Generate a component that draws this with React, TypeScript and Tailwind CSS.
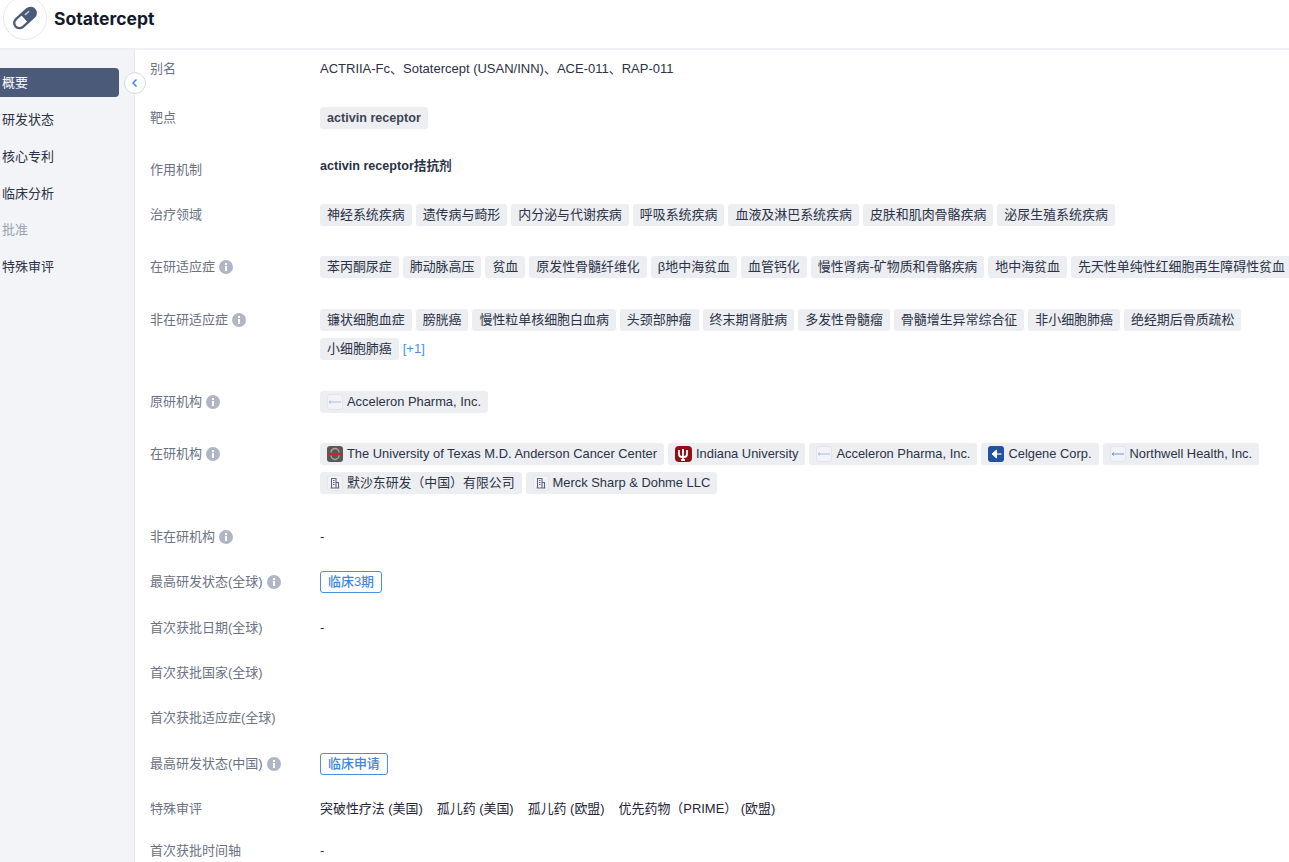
const Info = () => (
  <svg width="14" height="14" viewBox="0 0 14 14" className="ml-1 shrink-0">
    <circle cx="7" cy="7" r="7" fill="#b0b6c3" />
    <rect x="6" y="6" width="2" height="5" fill="#fff" />
    <rect x="6" y="3" width="2" height="2" fill="#fff" />
  </svg>
);

const Tag = ({ children, icon }: { children: React.ReactNode; icon?: React.ReactNode }) => (
  <span
    className={
      "inline-flex h-[22px] items-center rounded-[3px] bg-[#eceef2] px-[7px] leading-[22px] text-[#2b3245] whitespace-nowrap " +
      (icon ? "text-[12.9px]" : "text-[12.95px]")
    }
  >
    {icon}
    {children}
  </span>
);

const Dash = ({ color = "#a9bfe8" }: { color?: string }) => (
  <span className="mr-[4px] flex h-4 w-4 items-center justify-center rounded-[3px] border border-[#e2e5ec] bg-[#f1f3f7]">
    <svg width="14" height="6" viewBox="0 0 14 6" fill="none" stroke={color} strokeWidth="1">
      <path d="M1 3h12M3 1.5 1 3l2 1.5" />
    </svg>
  </span>
);

const Building = () => (
  <span className="mr-[4px] flex h-4 w-4 items-center justify-center rounded-[3px] border border-[#e2e5ec] bg-[#f1f3f7]">
    <svg width="12" height="12" viewBox="0 0 12 12" fill="none" stroke="#5d6579" strokeWidth="1.1">
      <path d="M2.5 11V1.5h4.5V11M7 5.5h2.5V11M1.5 11h9M4 3.5h1.5M4 5.5h1.5M4 7.5h1.5" />
    </svg>
  </span>
);

const Anderson = () => (
  <span className="mr-[4px] flex h-4 w-4 items-center justify-center rounded-[3px] bg-[#5b5755]">
    <svg width="14" height="14" viewBox="0 0 14 14" fill="none">
      <path d="M3 5.5a4 4 0 0 1 8 0M3 8.5a4 4 0 0 0 8 0" stroke="#a8a5a3" strokeWidth="1.4" />
      <path d="M0 7h14" stroke="#d6202a" strokeWidth="1.4" />
    </svg>
  </span>
);

const Indiana = () => (
  <span className="mr-[4px] flex h-4 w-[17px] items-center justify-center rounded-[4px] bg-[#8f1016]">
    <svg width="12" height="13" viewBox="0 0 12 13" fill="none" stroke="#fff" strokeWidth="1.8">
      <path d="M2 2v4a3 3 0 0 0 3 3h2a3 3 0 0 0 3-3V2M6 1v11M4 12h4" />
    </svg>
  </span>
);

const Celgene = () => (
  <span className="mr-[4px] flex h-4 w-4 items-center justify-center rounded-[3px] bg-[#23509f]">
    <svg width="14" height="14" viewBox="0 0 14 14" fill="none" stroke="#fff">
      <path d="M7.5 3 3 7l4.5 4Z" fill="#fff" strokeWidth="1" />
      <path d="M7 7h5.5" strokeWidth="1.2" />
    </svg>
  </span>
);

const Txt = ({ children }: { children: React.ReactNode }) => (
  <span className="text-[13px] leading-[22px] text-[#2b3245]">{children}</span>
);

const Status = ({ children }: { children: React.ReactNode }) => (
  <span className="inline-flex h-[22px] items-center rounded-[3px] border border-[#4a90e2] px-[7px] text-[12.95px] font-medium text-[#3f86dc]">{children}</span>
);

const rows: { label: string; info?: boolean; h: number; content?: React.ReactNode }[] = [
  { label: "别名", h: 49, content: <Txt>ACTRIIA-Fc、Sotatercept (USAN/INN)、ACE-011、RAP-011</Txt> },
  { label: "靶点", h: 52, content: <Tag><span className="text-[12.6px] font-bold text-[#3d4454]">activin receptor</span></Tag> },
  { label: "作用机制", h: 45, content: <span className="-mt-[4px] text-[12.6px] font-bold leading-[22px] text-[#2b3245]">activin receptor拮抗剂</span> },
  {
    label: "治疗领域", h: 52,
    content: ["神经系统疾病", "遗传病与畸形", "内分泌与代谢疾病", "呼吸系统疾病", "血液及淋巴系统疾病", "皮肤和肌肉骨骼疾病", "泌尿生殖系统疾病"].map((t) => <Tag key={t}>{t}</Tag>),
  },
  {
    label: "在研适应症", info: true, h: 53,
    content: ["苯丙酮尿症", "肺动脉高压", "贫血", "原发性骨髓纤维化", "β地中海贫血", "血管钙化", "慢性肾病-矿物质和骨骼疾病", "地中海贫血", "先天性单纯性红细胞再生障碍性贫血"].map((t) => <Tag key={t}>{t}</Tag>),
  },
  {
    label: "非在研适应症", info: true, h: 82,
    content: (
      <>
        {["镰状细胞血症", "膀胱癌", "慢性粒单核细胞白血病", "头颈部肿瘤", "终末期肾脏病", "多发性骨髓瘤", "骨髓增生异常综合征", "非小细胞肺癌", "绝经期后骨质疏松", "小细胞肺癌"].map((t) => <Tag key={t}>{t}</Tag>)}
        <span className="text-[13px] leading-[22px] text-[#4a90e2]">[+1]</span>
      </>
    ),
  },
  { label: "原研机构", info: true, h: 52, content: <Tag icon={<Dash />}>Acceleron Pharma, Inc.</Tag> },
  {
    label: "在研机构", info: true, h: 83,
    content: (
      <>
        <Tag icon={<Anderson />}>The University of Texas M.D. Anderson Cancer Center</Tag>
        <Tag icon={<Indiana />}>Indiana University</Tag>
        <Tag icon={<Dash />}>Acceleron Pharma, Inc.</Tag>
        <Tag icon={<Celgene />}>Celgene Corp.</Tag>
        <Tag icon={<Dash color="#6f94dc" />}>Northwell Health, Inc.</Tag>
        <Tag icon={<Building />}>默沙东研发（中国）有限公司</Tag>
        <Tag icon={<Building />}>Merck Sharp &amp; Dohme LLC</Tag>
      </>
    ),
  },
  { label: "非在研机构", info: true, h: 45, content: <Txt>-</Txt> },
  { label: "最高研发状态(全球)", info: true, h: 46, content: <Status>临床3期</Status> },
  { label: "首次获批日期(全球)", h: 45, content: <Txt>-</Txt> },
  { label: "首次获批国家(全球)", h: 45 },
  { label: "首次获批适应症(全球)", h: 46 },
  { label: "最高研发状态(中国)", info: true, h: 45, content: <Status>临床申请</Status> },
  {
    label: "特殊审评", h: 42,
    content: (
      <div className="flex gap-[14px] text-[12.95px] leading-[22px] text-[#1f2638]">
        <span>突破性疗法 (美国)</span>
        <span>孤儿药 (美国)</span>
        <span>孤儿药 (欧盟)</span>
        <span>优先药物（PRIME） (欧盟)</span>
      </div>
    ),
  },
  { label: "首次获批时间轴", h: 23, content: <Txt>-</Txt> },
];

const nav = ["概要", "研发状态", "核心专利", "临床分析", "批准", "特殊审评"];

export default function App() {
  return (
    <div className="flex h-[862px] w-[1289px] flex-col overflow-hidden bg-white font-['Liberation_Sans','Noto_Sans_CJK_SC',sans-serif]">
      <header className="flex h-[50px] shrink-0 items-center border-b-2 border-[#eeeff3] pl-[3px]">
        <div className="-mt-[13px] flex h-[44px] w-[44px] shrink-0 items-center justify-center rounded-full border border-[#e6e8ee] bg-white">
          <svg width="28" height="28" viewBox="0 0 32 32">
            <g transform="rotate(-42 16 16)">
              <rect x="1.5" y="10" width="29" height="12" rx="6" fill="#fff" stroke="#4b5a75" strokeWidth="2.6" />
              <path d="M15 10h9.5a6 6 0 0 1 0 12H15Z" fill="#4b5a75" />
              <rect x="18" y="12.5" width="7" height="1.6" rx="0.8" fill="#c9cfda" />
            </g>
          </svg>
        </div>
        <h1 className="-mt-[10px] ml-[7px] font-['Inter',sans-serif] text-[17.5px] font-bold text-[#141a2b]">Sotatercept</h1>
      </header>
      <div className="flex min-h-0 flex-1">
        <aside className="relative w-[135px] shrink-0 border-r border-[#e4e6ec] bg-[#f3f4f7] pt-[18px]">
          <div className="flex flex-col gap-[7.6px] pr-[15px]">
            {nav.map((n, i) => (
              <div
                key={n}
                className={
                  "flex h-[29px] items-center pl-[2px] text-[13px] " +
                  (i === 0
                    ? "mb-px rounded-r-[4px] bg-[#4a5a78] text-white"
                    : i === 4
                      ? "text-[#9aa1b0]"
                      : "text-[#2b3245]")
                }
              >
                {n}
              </div>
            ))}
          </div>
          <button className="absolute left-[124px] top-[22px] flex h-[22px] w-[22px] items-center justify-center rounded-full border border-[#d5d9e2] bg-white">
            <svg width="10" height="10" viewBox="0 0 10 10" fill="none" stroke="#3f86dc" strokeWidth="1.5">
              <path d="M6.5 1.5 3 5l3.5 3.5" />
            </svg>
          </button>
        </aside>
        <main className="min-w-0 flex-1 overflow-hidden pl-[15px] pt-[8px]">
          {rows.map((r) => (
            <div key={r.label} className="flex" style={{ height: r.h }}>
              <div className="flex h-[22px] w-[170px] shrink-0 items-center text-[13px] text-[#6a7284]">
                {r.label}
                {r.info && <Info />}
              </div>
              <div className="flex w-[985px] shrink-0 flex-wrap content-start items-center gap-x-[4px] gap-y-[7px]">{r.content}</div>
            </div>
          ))}
        </main>
      </div>
    </div>
  );
}
